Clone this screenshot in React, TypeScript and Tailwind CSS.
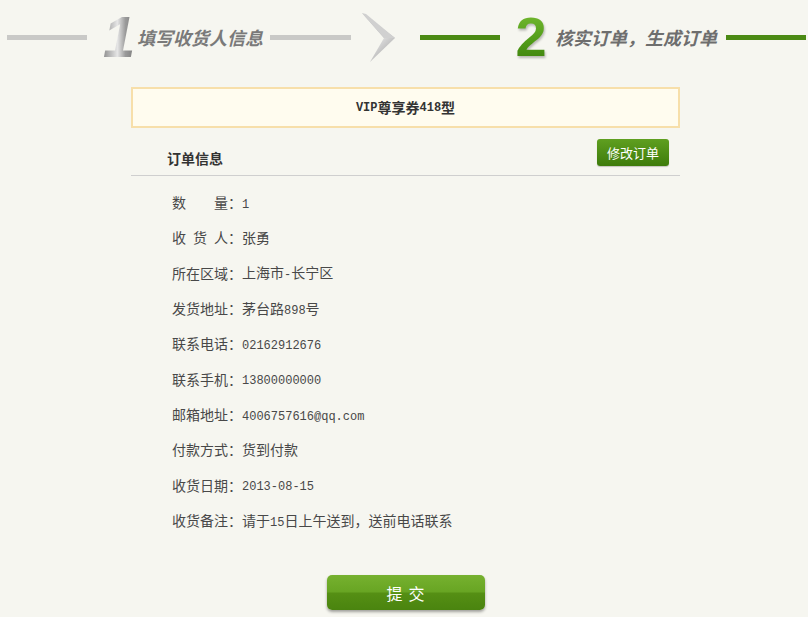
import React from 'react'

const rows: { label: string[]; value: string }[] = [
  { label: ['数', '量：'], value: '1' },
  { label: ['收', '货', '人：'], value: '张勇' },
  { label: ['所在区域：'], value: '上海市-长宁区' },
  { label: ['发货地址：'], value: '茅台路898号' },
  { label: ['联系电话：'], value: '02162912676' },
  { label: ['联系手机：'], value: '13800000000' },
  { label: ['邮箱地址：'], value: '4006757616@qq.com' },
  { label: ['付款方式：'], value: '货到付款' },
  { label: ['收货日期：'], value: '2013-08-15' },
  { label: ['收货备注：'], value: '请于15日上午送到，送前电话联系' },
]

// ascii runs in a narrow mono face, like the old bitmap song font
function Mixed({ text }: { text: string }) {
  const parts = text.split(/([\x20-\x7e]+)/).filter(Boolean)
  return (
    <>
      {parts.map((p, i) =>
        /^[\x20-\x7e]+$/.test(p) ? (
          <span key={i} className="font-['Liberation_Mono',monospace] text-[12px]">
            {p}
          </span>
        ) : (
          <span key={i}>{p}</span>
        )
      )}
    </>
  )
}

function Chevron() {
  return (
    <svg width="36" height="50" viewBox="0 0 36 50">
      <defs>
        <linearGradient id="chev" x1="0" y1="0" x2="1" y2="1">
          <stop offset="0" stopColor="#f2f2f2" />
          <stop offset="0.5" stopColor="#c4c4c4" />
          <stop offset="1" stopColor="#e6e6e6" />
        </linearGradient>
      </defs>
      <polygon points="0,0 33,25 22,25" fill="#bdbdbd" />
      <polygon points="22,25 33,25 8,49" fill="url(#chev)" />
      <polygon points="0,0 4,1 33,25 22,25" fill="#d0d0d0" />
    </svg>
  )
}

function Steps() {
  return (
    <div className="flex h-[74px] items-center pl-[7px]">
      <div className="h-[5px] w-[80px] bg-[#c9c9c7]" />
      <div className="ml-[18px] flex w-[28px] justify-center">
        <span className="bg-[linear-gradient(to_right,#8c8c8c,#e6e6e6_45%,#9a9a9a_70%,#7c7c7c)] bg-clip-text font-['Liberation_Sans',sans-serif] text-[58px] font-bold italic leading-none text-transparent">
          1
        </span>
      </div>
      <span className="ml-[4px] font-['Noto_Sans_CJK_SC',sans-serif] text-[18px] font-bold italic leading-none text-[#7a7a7a]">
        填写收货人信息
      </span>
      <div className="ml-[7px] h-[5px] w-[81px] bg-[#c9c9c7]" />
      <div className="ml-[11px] mt-[2px]">
        <Chevron />
      </div>
      <div className="ml-[22px] h-[5px] w-[80px] bg-[#4b8a14]" />
      <div className="ml-[15px] flex w-[32px] justify-center">
        <span className="bg-[linear-gradient(to_bottom,#78bd33,#4f9a17_60%,#3d7e0b)] bg-clip-text font-['Liberation_Sans',sans-serif] text-[56px] font-bold leading-none text-transparent [filter:drop-shadow(1px_2px_1px_rgba(0,0,0,0.25))]">
          2
        </span>
      </div>
      <span className="ml-[8px] font-['Noto_Sans_CJK_SC',sans-serif] text-[18px] font-bold italic leading-none text-[#6e6e6e]">
        核实订单，生成订单
      </span>
      <div className="ml-[9px] h-[5px] w-[80px] bg-[#4b8a14]" />
    </div>
  )
}

export default function App() {
  return (
    <div className="min-h-[617px] bg-[#f6f6f0] font-['Noto_Sans_CJK_SC',sans-serif] text-[#484848]">
      <Steps />

      <div className="ml-[131px] mt-[13px] w-[549px]">
        {/* product */}
        <div className="flex h-[41px] items-center justify-center border-2 border-[#f7dfaa] bg-[#fffcef] text-[14px] font-bold text-[#333]">
          <Mixed text="VIP尊享券418型" />
        </div>

        {/* order header */}
        <div className="flex items-end justify-between border-b border-[#cfcfcf] pb-[9px] pt-[11px]">
          <span className="mb-[1px] pl-[36px] text-[14px] font-bold leading-none text-[#333]">订单信息</span>
          <button className="mr-[11px] flex h-[27px] w-[72px] items-center justify-center rounded-[3px] bg-[linear-gradient(to_bottom,#5f9f20,#3e7c0b)] text-[13px] text-white shadow-[0_1px_1px_rgba(0,0,0,0.2)]">
            修改订单
          </button>
        </div>

        {/* rows */}
        <div className="pl-[41px] pt-[9px]">
          {rows.map((r, i) => (
            <div key={i} className="flex h-[35.33px] items-center text-[14px]">
              <div className="flex w-[70px] justify-between">
                {r.label.map((l, j) => (
                  <span key={j}>{l}</span>
                ))}
              </div>
              <span>
                <Mixed text={r.value} />
              </span>
            </div>
          ))}
        </div>

        {/* submit */}
        <div className="mt-[37px] flex justify-center">
          <button className="flex h-[35px] w-[158px] items-center justify-center rounded-[5px] bg-[linear-gradient(to_bottom,#76b12f_0%,#68a523_48%,#558f14_52%,#4a840f_100%)] text-[16px] tracking-[6px] text-white shadow-[0_2px_3px_rgba(0,0,0,0.35)]">
            <span className="pl-[6px]">提交</span>
          </button>
        </div>
      </div>
    </div>
  )
}
